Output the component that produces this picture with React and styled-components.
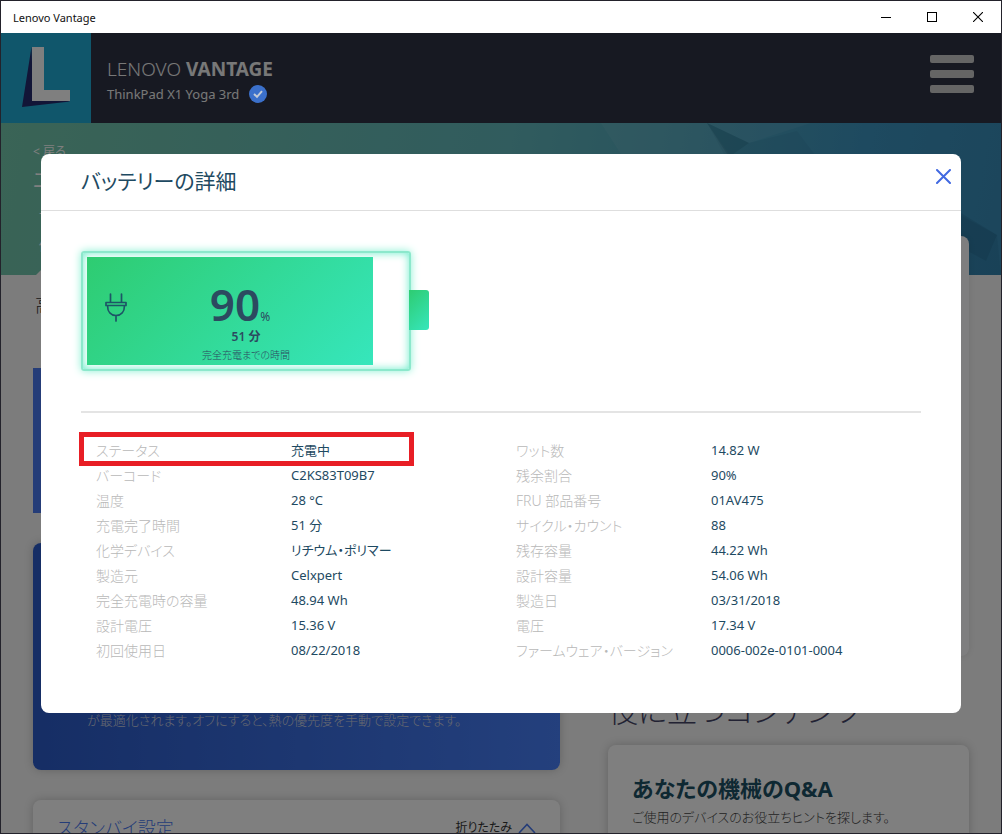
import React from "react";
import styled, { createGlobalStyle } from "styled-components";

const leftDetails = [
  { label: "ステータス", value: "充電中" },
  { label: "バーコード", value: "C2KS83T09B7" },
  { label: "温度", value: "28 °C" },
  { label: "充電完了時間", value: "51 分" },
  { label: "化学デバイス", value: "リチウム・ポリマー" },
  { label: "製造元", value: "Celxpert" },
  { label: "完全充電時の容量", value: "48.94 Wh" },
  { label: "設計電圧", value: "15.36 V" },
  { label: "初回使用日", value: "08/22/2018" },
];

const rightDetails = [
  { label: "ワット数", value: "14.82 W" },
  { label: "残余割合", value: "90%" },
  { label: "FRU 部品番号", value: "01AV475" },
  { label: "サイクル・カウント", value: "88" },
  { label: "残存容量", value: "44.22 Wh" },
  { label: "設計容量", value: "54.06 Wh" },
  { label: "製造日", value: "03/31/2018" },
  { label: "電圧", value: "17.34 V" },
  { label: "ファームウェア・バージョン", value: "0006-002e-0101-0004" },
];

function TitleBar() {
  return (
    <Bar>
      <span>Lenovo Vantage</span>
      <WindowButtons>
        <WindowButton aria-label="最小化">
          <svg width="10" height="10" viewBox="0 0 10 10">
            <path d="M0 5.5H10" stroke="#000" />
          </svg>
        </WindowButton>
        <WindowButton aria-label="最大化">
          <svg width="10" height="10" viewBox="0 0 10 10">
            <rect x="0.5" y="0.5" width="9" height="9" fill="none" stroke="#000" />
          </svg>
        </WindowButton>
        <WindowButton aria-label="閉じる">
          <svg width="10" height="10" viewBox="0 0 10 10">
            <path d="M0 0L10 10M10 0L0 10" stroke="#000" strokeWidth="1.1" />
          </svg>
        </WindowButton>
      </WindowButtons>
    </Bar>
  );
}

function Header() {
  return (
    <Top>
      <Logo>
        <svg width="90" height="90" viewBox="0 0 90 90">
          <path d="M30.5 14L21 74L69 68.500L32 60Z" fill="#252a6e" />
          <path d="M31 14H43V57H69V68H31Z" fill="#fff" />
        </svg>
      </Logo>
      <Brand>
        <h1>
          LENOVO <b>VANTAGE</b>
        </h1>
        <Device>
          ThinkPad X1 Yoga 3rd
          <Badge width="18" height="18" viewBox="0 0 18 18">
            <circle cx="9" cy="9" r="9" fill="#3b70cb" />
            <path d="M5 9L8 11.800L13 6.200" fill="none" stroke="#c4cbd6" strokeWidth="2" />
          </Badge>
        </Device>
      </Brand>
      <MenuButton aria-label="メニュー">
        <i />
        <i />
        <i />
      </MenuButton>
    </Top>
  );
}

function DetailList({ items }) {
  return (
    <Details>
      {items.map((item) => (
        <DetailRow key={item.label}>
          <dt>{item.label}</dt>
          <dd>{item.value}</dd>
        </DetailRow>
      ))}
    </Details>
  );
}

function BatteryDialog() {
  return (
    <Dialog role="dialog" aria-labelledby="battery-title">
      <DialogHeader>
        <h2 id="battery-title">バッテリーの詳細</h2>
        <CloseButton aria-label="閉じる">
          <svg width="15" height="15" viewBox="0 0 15 15">
            <path
              d="M1 1L14 14M14 1L1 14"
              stroke="#4169e1"
              strokeWidth="2"
              strokeLinecap="round"
            />
          </svg>
        </CloseButton>
      </DialogHeader>
      <DialogBody>
        <Battery>
          <Case>
            <Charge style={{ width: "90%" }}>
              <Plug width="22" height="29" viewBox="0 0 22 29">
                <path
                  d="M5.500 1V9M16.500 1V9M1 9.500H21V12.500H1ZM2.500 12.500C2.500 19 6 22.500 11 22.500S19.500 19 19.500 12.500M11 22.500V28"
                  fill="none"
                  stroke="#1d5566"
                  strokeWidth="1.7"
                  strokeLinecap="round"
                  strokeLinejoin="round"
                />
              </Plug>
            </Charge>
            <Reading>
              <Percent>
                90<small>%</small>
              </Percent>
              <Remaining>51 分</Remaining>
              <Caption>完全充電までの時間</Caption>
            </Reading>
          </Case>
          <Cap />
        </Battery>
        <Columns>
          <DetailList items={leftDetails} />
          <DetailList items={rightDetails} />
          <Highlight />
        </Columns>
      </DialogBody>
    </Dialog>
  );
}

function App() {
  return (
    <>
      <GlobalStyle />
      <Window>
        <TitleBar />
        <Page>
          <Header />
          <Hero>
            <Facets viewBox="0 0 400 152" preserveAspectRatio="none">
              <path d="M0 0H106L128 31H20Z" fill="#fff" opacity="0.06" />
              <path d="M106 0L148 20L210 0Z" fill="#fff" opacity="0.05" />
              <path d="M106 0L148 20L128 34Z" fill="#003850" opacity="0.14" />
              <path d="M106 0L148 20L196 8L220 40H128Z" fill="#003850" opacity="0.06" />
              <path d="M350 84L396 112L385 138L352 120Z" fill="#003050" opacity="0.12" />
              <path d="M300 60L396 112L400 152L300 152Z" fill="#003050" opacity="0.08" />
            </Facets>
            <BackLink href="#back">&lt; 戻る</BackLink>
            <HeroTitle>エネルギー</HeroTitle>
            <HeroLink href="#general">一般設定</HeroLink>
            <HeroLink href="#custom">個別設定</HeroLink>
            <Pointer />
          </Hero>
          <Content>
            <Main>
              <Section>高度な設定</Section>
              <Tile />
              <BlueCard>
                <p>が最適化されます。オフにすると、熱の優先度を手動で設定できます。</p>
              </BlueCard>
              <Card>
                <StandbyHead>
                  <h3>スタンバイ設定</h3>
                  <FoldButton>
                    折りたたみ
                    <svg width="18" height="11" viewBox="0 0 18 11">
                      <path d="M1 10L9 1.500L17 10" fill="none" stroke="#4a7af0" strokeWidth="1.600" />
                    </svg>
                  </FoldButton>
                </StandbyHead>
              </Card>
            </Main>
            <Side>
              <TallCard />
              <SideTitle>役に立つコンテンツ</SideTitle>
              <Card>
                <h3>あなたの機械のQ&amp;A</h3>
                <p>ご使用のデバイスのお役立ちヒントを探します。</p>
              </Card>
            </Side>
          </Content>
          <Overlay>
            <BatteryDialog />
          </Overlay>
        </Page>
      </Window>
    </>
  );
}

const GlobalStyle = createGlobalStyle`
  * {
    box-sizing: border-box;
    margin: 0;
    padding: 0;
  }

  body {
    font-family: "Noto Sans", "Noto Sans CJK JP", sans-serif;
    font-size: 13px;
    font-feature-settings: "palt";
    overflow: hidden;
  }

  button {
    border: 0;
    background: none;
    font: inherit;
    font-feature-settings: inherit;
    color: inherit;
  }

  a {
    color: inherit;
    text-decoration: none;
  }

  svg {
    display: block;
  }
`;

const Window = styled.div`
  display: flex;
  flex-direction: column;
  height: 100vh;
  border: 1px solid #23222b;
  overflow: hidden;
`;

const Bar = styled.div`
  display: flex;
  justify-content: space-between;
  align-items: center;
  flex: 0 0 32px;
  padding-left: 12px;
  background-color: #fff;
  color: #111;
  font-size: 11px;
`;

const WindowButtons = styled.div`
  display: flex;
  align-self: stretch;
`;

const WindowButton = styled.button`
  display: flex;
  justify-content: center;
  align-items: center;
  width: 46px;
`;

/* everything in the page sits under the half black overlay */
const Page = styled.div`
  position: relative;
  flex: 1;
  min-height: 0;
  overflow: hidden;
  background-color: #f8f8f8;
`;

const Top = styled.header`
  display: flex;
  align-items: center;
  height: 90px;
  padding-right: 27px;
  background-color: #2e3244;
  color: #fff;
`;

const Logo = styled.div`
  width: 90px;
  height: 90px;
  background-color: #20acd6;
`;

const Brand = styled.div`
  flex: 1;
  padding: 6px 0 0 16px;
  color: #f0f0f0;

  h1 {
    font-size: 19px;
    font-weight: 300;
    line-height: 26px;
  }

  b {
    font-weight: 700;
  }
`;

const Device = styled.p`
  display: flex;
  align-items: center;
  gap: 10px;
  line-height: 24px;
`;

/* stays bright above the overlay */
const Badge = styled.svg`
  position: relative;
  z-index: 2;
`;

const MenuButton = styled.button`
  display: flex;
  flex-direction: column;
  gap: 7px;
  padding-bottom: 8px;

  i {
    width: 44px;
    height: 8px;
    border-radius: 2px;
    background-color: #cacaca;
  }
`;

const Hero = styled.div`
  position: relative;
  height: 152px;
  padding: 20px 32px 0;
  background: linear-gradient(100deg, #74c8ac 0%, #62b8bc 50%, #3c94c0 85%, #388cb8 100%);
  color: #fff;
`;

const Facets = styled.svg`
  position: absolute;
  top: 0;
  right: 0;
  width: 40%;
  height: 100%;
`;

const BackLink = styled.a`
  display: block;
  font-size: 12px;
  line-height: 18px;
`;

const HeroTitle = styled.h2`
  font-size: 21px;
  font-weight: 400;
  line-height: 36px;
`;

const HeroLink = styled.a`
  display: block;
  padding-left: 6px;
  line-height: 32px;
`;

const Pointer = styled.div`
  position: absolute;
  left: 35px;
  bottom: 0;
  width: 20px;
  height: 10px;
  background-color: #f8f8f8;
  clip-path: polygon(50% 0, 100% 100%, 0 100%);
`;

const Content = styled.div`
  display: flex;
  gap: 48px;
  padding: 0 32px;
`;

const Main = styled.main`
  flex: 527;
  min-width: 0;
`;

const Side = styled.aside`
  position: relative;
  flex: 361;
  min-width: 0;
  margin-top: -39px;
`;

const Section = styled.h3`
  padding: 16px 2px 0;
  height: 93px;
  font-size: 18px;
  font-weight: 300;
  line-height: 28px;
  color: #333;
`;

const Tile = styled.div`
  height: 145px;
  margin-bottom: 30px;
  background-color: #4a7af0;
`;

const BlueCard = styled.div`
  height: 227px;
  margin-bottom: 30px;
  padding: 167px 54px 0;
  border-radius: 8px;
  background: linear-gradient(90deg, #2c5cca, #4880fa);
  box-shadow: 0 0 10px rgba(0, 0, 0, 0.2);
  color: #ccd0e0;

  p {
    font-weight: 300;
    line-height: 20px;
  }
`;

const Card = styled.div`
  padding: 24px;
  border-radius: 8px;
  background-color: #fff;
  box-shadow: 0 0 10px rgba(0, 0, 0, 0.2);

  h3 {
    font-size: 22px;
    font-weight: 700;
    line-height: 38px;
    color: #1c5064;
  }

  p {
    font-size: 13px;
    font-weight: 300;
    line-height: 20px;
    color: #444;
  }
`;

const StandbyHead = styled.div`
  display: flex;
  justify-content: space-between;
  align-items: flex-start;
  margin-top: -6px;

  h3 {
    font-size: 18px;
    font-weight: 300;
    line-height: 20px;
    color: #4a7af0;
  }
`;

const FoldButton = styled.button`
  display: flex;
  align-items: center;
  gap: 6px;
  font-size: 12px;
  line-height: 20px;
  color: #333;
`;

const TallCard = styled.div`
  height: 420px;
  margin-bottom: 30px;
  border-radius: 8px;
  background-color: #fdfdff;
  box-shadow: 0 0 6px rgba(0, 0, 0, 0.1);
`;

const SideTitle = styled.h2`
  height: 59px;
  font-size: 30px;
  font-weight: 300;
  line-height: 50px;
  color: #444466;
`;

const Overlay = styled.div`
  position: absolute;
  inset: 0;
  z-index: 1;
  padding: 121px 40px 0;
  background-color: rgba(0, 0, 0, 0.5);
`;

const Dialog = styled.section`
  border-radius: 8px;
  background-color: #fff;
  color: #1e4a62;
`;

const DialogHeader = styled.header`
  display: flex;
  justify-content: space-between;
  align-items: flex-start;
  height: 57px;
  padding: 0 10px 0 40px;
  border-bottom: 1px solid #dedede;

  h2 {
    font-size: 21px;
    font-weight: 400;
    line-height: 54px;
  }
`;

const CloseButton = styled.button`
  padding-top: 15px;
`;

const DialogBody = styled.div`
  padding: 40px 40px 50px;
`;

const Battery = styled.div`
  display: flex;
  align-items: center;
  margin-bottom: 40px;
`;

const Case = styled.div`
  position: relative;
  width: 330px;
  height: 120px;
  padding: 4px;
  border: 2px solid #8ce8cc;
  border-radius: 3px;
  box-shadow: 0 0 9px #8af0d4, inset 0 0 9px #6cecca;
`;

const Charge = styled.div`
  display: flex;
  align-items: center;
  height: 100%;
  padding-left: 18px;
  background: linear-gradient(135deg, #2ecc71, #36e6bc);
`;

const Plug = styled.svg`
  margin-bottom: 8px;
`;

const Reading = styled.div`
  position: absolute;
  inset: 0;
  display: flex;
  flex-direction: column;
  align-items: center;
  padding-top: 26px;
  color: #2c4a60;
`;

const Percent = styled.div`
  display: flex;
  align-items: baseline;
  height: 50px;
  padding-right: 12px;
  font-size: 44px;
  font-weight: 600;
  line-height: 50px;

  small {
    font-size: 12px;
    font-weight: 400;
    line-height: 12px;
  }
`;

const Remaining = styled.div`
  font-size: 12px;
  font-weight: 600;
  line-height: 16px;
`;

const Caption = styled.div`
  font-size: 10px;
  font-weight: 300;
  line-height: 20px;
`;

const Cap = styled.div`
  position: relative;
  width: 20px;
  height: 40px;
  margin: 0 0 2px -2px;
  border-radius: 0 3px 3px 0;
  background: linear-gradient(135deg, #2ecc71, #36e6bc);
`;

const Columns = styled.div`
  position: relative;
  display: grid;
  grid-template-columns: 1fr 1fr;
  padding-top: 25px;
  border-top: 2px solid #e4e4e4;
`;

const Details = styled.dl`
  padding-left: 15px;
`;

const DetailRow = styled.div`
  display: grid;
  grid-template-columns: 195px 1fr;
  line-height: 25px;

  dt {
    font-size: 14px;
    font-weight: 300;
    color: #b8b8b8;
  }
`;

/* red marker drawn round the status row */
const Highlight = styled.div`
  position: absolute;
  top: 19px;
  left: -2px;
  width: 335px;
  height: 34px;
  border: 5px solid #e81e25;
`;

export default App;
